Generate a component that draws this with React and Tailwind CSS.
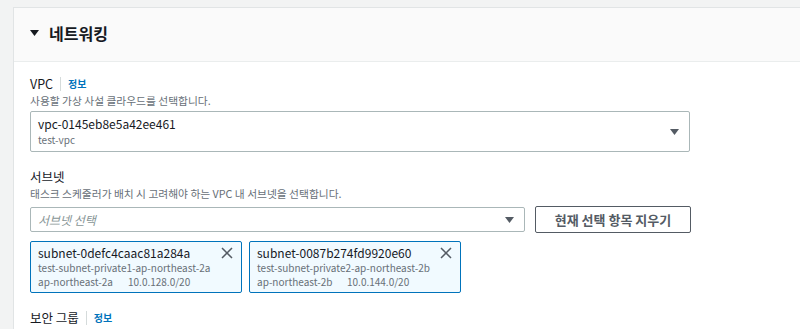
import React from 'react';

const font = { fontFamily: '"Noto Sans CJK KR", "Liberation Sans", sans-serif' };

function Caret({ color = '#545b64' }) {
  return (
    <svg width="9" height="6" viewBox="0 0 9 6" className="shrink-0">
      <path d="M0 0 H9 L4.5 6 Z" fill={color} />
    </svg>
  );
}

function CloseIcon() {
  return (
    <svg width="12" height="12" viewBox="0 0 12 12" className="shrink-0">
      <path d="M1 1 L11 11 M11 1 L1 11" stroke="#545b64" strokeWidth="1.5" fill="none" />
    </svg>
  );
}

function Label({ text, info }) {
  return (
    <div className="flex items-center h-[18px]">
      <span className="text-[12.5px] leading-[18px] text-[#16191f]">{text}</span>
      {info && (
        <>
          <span className="w-px h-[14px] bg-[#d5dbdb] mx-[7px]" />
          <span className="text-[10px] leading-[18px] font-bold text-[#0073bb]">정보</span>
        </>
      )}
    </div>
  );
}

function Token({ id, name, az, cidr }) {
  return (
    <div className="w-[212px] h-[52px] border border-[#0073bb] bg-[#f1faff] rounded-[2px] pl-[7px] pr-[8px] pt-[3px]">
      <div className="flex items-center justify-between h-[16px]">
        <span className="text-[12px] leading-[16px] text-[#16191f]">{id}</span>
        <CloseIcon />
      </div>
      <div className="text-[10px] leading-[14px] text-[#687078]">{name}</div>
      <div className="flex text-[10px] leading-[14px] text-[#687078]">
        <span className="w-[90px]">{az}</span>
        <span>{cidr}</span>
      </div>
    </div>
  );
}

export default function App() {
  return (
    <div style={font} className="w-[800px] h-[329px] bg-[#f2f3f3] pt-[7px] pl-[13px] overflow-hidden">
      <div className="bg-white border-l border-t border-[#e1e4e5] h-[330px]">
        {/* 헤더 */}
        <div className="h-[54px] bg-[#fafafa] border-b border-[#eaeded] flex items-center pl-4 gap-[10px] pb-[3px]">
          <Caret color="#16191f" />
          <span className="text-[16px] leading-[20px] font-bold text-[#16191f]">네트워킹</span>
        </div>

        {/* 본문 */}
        <div className="pl-4 pt-[13px]">
          <Label text="VPC" info />
          <div className="text-[10.75px] leading-[16px] text-[#687078]">사용할 가상 사설 클라우드를 선택합니다.</div>
          <div className="mt-[2px] w-[660px] h-[41px] border border-[#aab7b8] rounded-[2px] pl-[7px] pr-[10px] pt-[3px] flex justify-between">
            <div>
              <div className="text-[12px] leading-[18px] text-[#16191f]">vpc-0145eb8e5a42ee461</div>
              <div className="text-[10px] leading-[14px] text-[#687078]">test-vpc</div>
            </div>
            <div className="flex items-center pb-[3px]">
              <Caret />
            </div>
          </div>

          <div className="mt-[16px]">
            <Label text="서브넷" />
          </div>
          <div className="text-[10.75px] leading-[16px] text-[#687078]">태스크 스케줄러가 배치 시 고려해야 하는 VPC 내 서브넷을 선택합니다.</div>
          <div className="mt-[4px] flex items-center gap-[10px] h-[27px]">
            <div className="w-[495px] h-[25px] border border-[#aab7b8] rounded-[2px] pl-[7px] pr-[10px] flex items-center justify-between">
              <span className="text-[12px] italic text-[#879596]">서브넷 선택</span>
              <Caret />
            </div>
            <button className="w-[156px] h-[27px] border border-[#545b64] rounded-[2px] bg-white text-[13px] font-bold text-[#545b64]">
              현재 선택 항목 지우기
            </button>
          </div>

          <div className="mt-[8px] flex gap-[7px]">
            <Token id="subnet-0defc4caac81a284a" name="test-subnet-private1-ap-northeast-2a" az="ap-northeast-2a" cidr="10.0.128.0/20" />
            <Token id="subnet-0087b274fd9920e60" name="test-subnet-private2-ap-northeast-2b" az="ap-northeast-2b" cidr="10.0.144.0/20" />
          </div>

          <div className="mt-[16px]">
            <Label text="보안 그룹" info />
          </div>
        </div>
      </div>
    </div>
  );
}
